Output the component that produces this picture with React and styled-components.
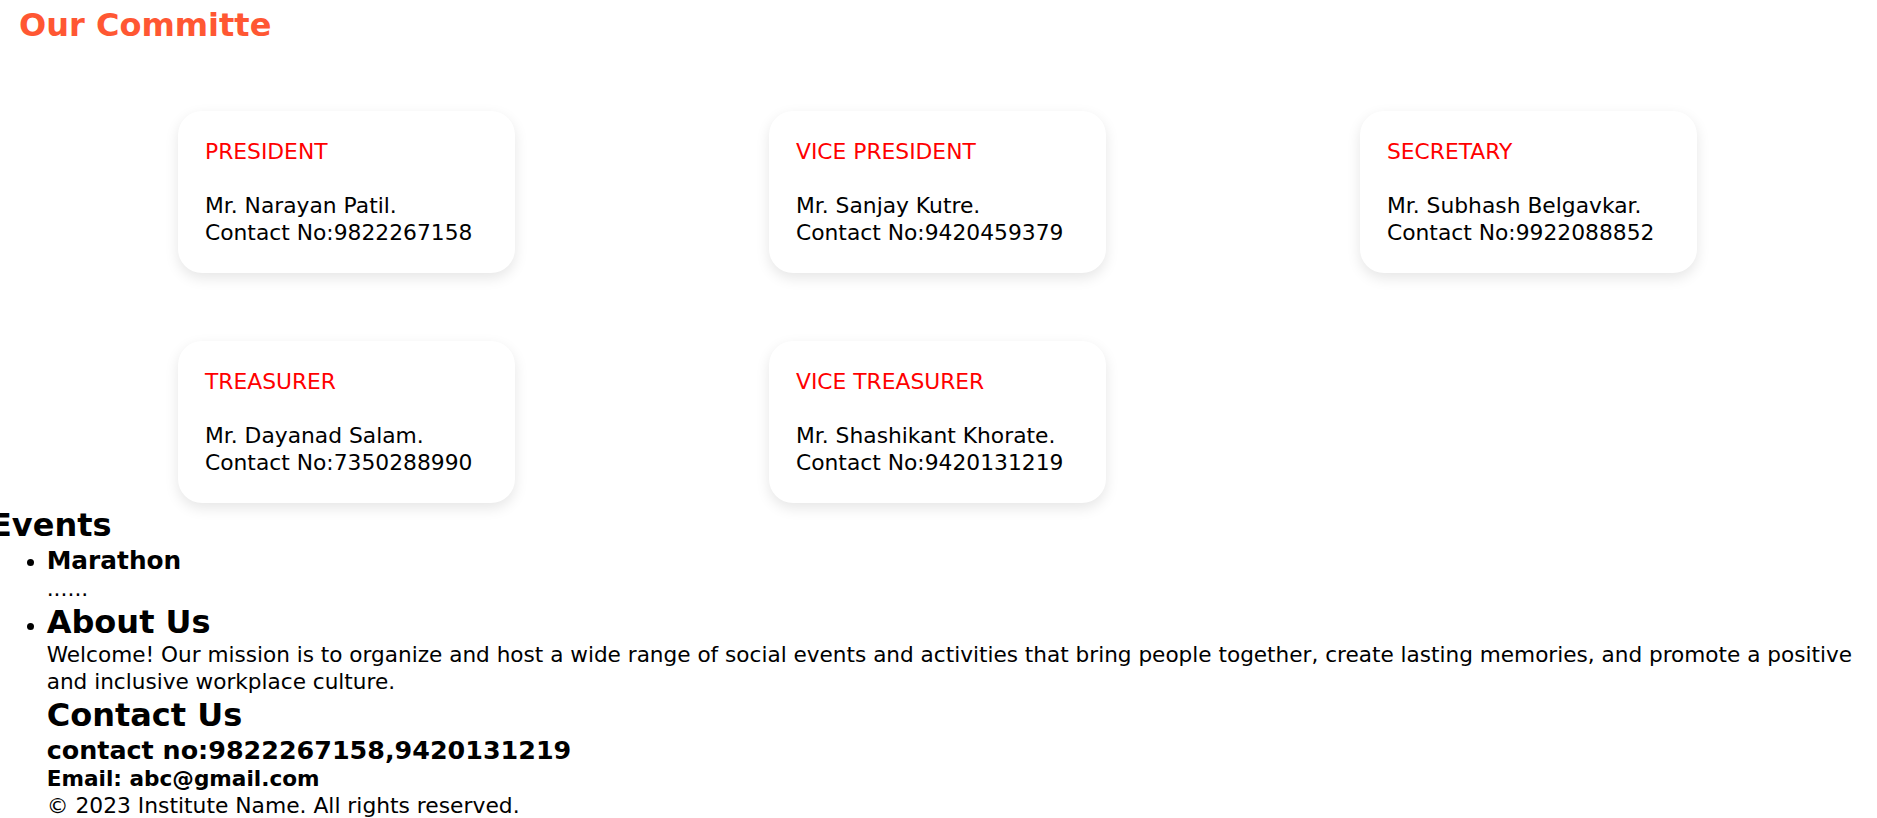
import styled, { createGlobalStyle } from 'styled-components';

const GlobalStyle = createGlobalStyle`
  html, body {
    margin: 0;
    padding: 0;
    background: #fff;
    overflow: hidden;
  }
  body {
    font-family: Verdana, "DejaVu Sans", sans-serif;
    font-size: 21.8px;
    line-height: 26.7px;
    color: #000;
  }
`;

const committee = [
  { role: 'PRESIDENT', name: 'Mr. Narayan Patil.', phone: '9822267158' },
  { role: 'VICE PRESIDENT', name: 'Mr. Sanjay Kutre.', phone: '9420459379' },
  { role: 'SECRETARY', name: 'Mr. Subhash Belgavkar.', phone: '9922088852' },
  { role: 'TREASURER', name: 'Mr. Dayanad Salam.', phone: '7350288990' },
  { role: 'VICE TREASURER', name: 'Mr. Shashikant Khorate.', phone: '9420131219' },
];

const Page = styled.div`
  padding-top: 6px;
`;

const Heading = styled.h2`
  margin: 0;
  font-size: 32px;
  line-height: 39.3px;
  font-weight: bold;
  color: ${(p) => p.$color || '#000'};
  margin-left: ${(p) => p.$indent || 0}px;
`;

const SubHeading = styled.h3`
  margin: 0;
  font-size: ${(p) => p.$size || 25}px;
  line-height: 30.8px;
  font-weight: bold;
`;

const SmallHeading = styled.h4`
  margin: 0;
  font-size: 21.6px;
  line-height: 26.7px;
  font-weight: bold;
`;

const Text = styled.p`
  margin: 0;
  font-size: ${(p) => (p.$size ? `${p.$size}px` : 'inherit')};
`;

const CardGrid = styled.div`
  display: grid;
  grid-template-columns: repeat(3, 1fr);
  justify-items: center;
  row-gap: 68px;
  padding: 0 53px 0 51px;
  margin: 66px 0 3px;
`;

const Card = styled.div`
  box-sizing: border-box;
  width: 337px;
  height: 162px;
  padding: 28px 26px 26px 27px;
  background: #fff;
  border-radius: 24px;
  box-shadow: 0 5px 14px rgba(0, 0, 0, 0.1);
`;

const Role = styled.div`
  color: #ff0000;
  margin-bottom: 27px;
`;

const List = styled.ul`
  margin: 0;
  padding: 0 10px 0 46.7px;
  list-style: disc;
`;

const Footer = styled.div`
  border-top: 1px solid #d3d3d3;
  height: 20px;
`;

export default function App() {
  return (
    <Page>
      <GlobalStyle />
      <Heading $color="#ff5733" $indent={19}>Our Committe</Heading>
      <CardGrid>
        {committee.map((m) => (
          <Card key={m.role}>
            <Role>{m.role}</Role>
            <Text>{m.name}</Text>
            <Text>Contact No:{m.phone}</Text>
          </Card>
        ))}
      </CardGrid>
      <Heading $indent={-10}>Events</Heading>
      <List>
        <li>
          <SubHeading $size={24.8}>Marathon</SubHeading>
          <Text>......</Text>
        </li>
        <li>
          <Heading>About Us</Heading>
          <Text $size={21.6}>
            Welcome! Our mission is to organize and host a wide range of social events and activities that bring
            people together, create lasting memories, and promote a positive and inclusive workplace culture.
          </Text>
          <Heading>Contact Us</Heading>
          <SubHeading $size={25.4}>contact no:9822267158,9420131219</SubHeading>
          <SmallHeading>Email: abc@gmail.com</SmallHeading>
          <Text>© 2023 Institute Name. All rights reserved.</Text>
        </li>
      </List>
      <Footer />
    </Page>
  );
}
